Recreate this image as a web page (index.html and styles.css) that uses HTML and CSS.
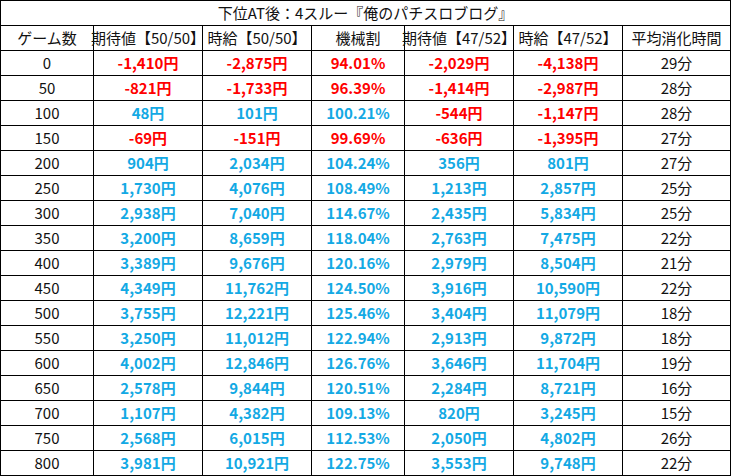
FILE: index.html
```html
<!DOCTYPE html>
<html lang="ja">
<head>
<meta charset="utf-8">
<title>下位AT後：4スルー</title>
<link rel="stylesheet" href="styles.css">
</head>
<body>
<table class="sheet">
  <colgroup>
    <col class="c-game"><col class="c-val"><col class="c-val"><col class="c-rate"><col class="c-val"><col class="c-val"><col class="c-time">
  </colgroup>
  <tr class="title-row"><td colspan="7">下位AT後：4スルー『俺のパチスロブログ』</td></tr>
  <tr class="head-row">
    <td><div class="fit">ゲーム数</div></td>
    <td><div class="fit">期待値【50/50】</div></td>
    <td><div class="fit">時給【50/50】</div></td>
    <td><div class="fit">機械割</div></td>
    <td><div class="fit">期待値【47/52】</div></td>
    <td><div class="fit">時給【47/52】</div></td>
    <td><div class="fit">平均消化時間</div></td>
  </tr>
  <tr><td>0</td><td class="r">-1,410円</td><td class="r">-2,875円</td><td class="r">94.01%</td><td class="r">-2,029円</td><td class="r">-4,138円</td><td>29分</td></tr>
  <tr><td>50</td><td class="r">-821円</td><td class="r">-1,733円</td><td class="r">96.39%</td><td class="r">-1,414円</td><td class="r">-2,987円</td><td>28分</td></tr>
  <tr><td>100</td><td class="b">48円</td><td class="b">101円</td><td class="b">100.21%</td><td class="r">-544円</td><td class="r">-1,147円</td><td>28分</td></tr>
  <tr><td>150</td><td class="r">-69円</td><td class="r">-151円</td><td class="r">99.69%</td><td class="r">-636円</td><td class="r">-1,395円</td><td>27分</td></tr>
  <tr><td>200</td><td class="b">904円</td><td class="b">2,034円</td><td class="b">104.24%</td><td class="b">356円</td><td class="b">801円</td><td>27分</td></tr>
  <tr><td>250</td><td class="b">1,730円</td><td class="b">4,076円</td><td class="b">108.49%</td><td class="b">1,213円</td><td class="b">2,857円</td><td>25分</td></tr>
  <tr><td>300</td><td class="b">2,938円</td><td class="b">7,040円</td><td class="b">114.67%</td><td class="b">2,435円</td><td class="b">5,834円</td><td>25分</td></tr>
  <tr><td>350</td><td class="b">3,200円</td><td class="b">8,659円</td><td class="b">118.04%</td><td class="b">2,763円</td><td class="b">7,475円</td><td>22分</td></tr>
  <tr><td>400</td><td class="b">3,389円</td><td class="b">9,676円</td><td class="b">120.16%</td><td class="b">2,979円</td><td class="b">8,504円</td><td>21分</td></tr>
  <tr><td>450</td><td class="b">4,349円</td><td class="b">11,762円</td><td class="b">124.50%</td><td class="b">3,916円</td><td class="b">10,590円</td><td>22分</td></tr>
  <tr><td>500</td><td class="b">3,755円</td><td class="b">12,221円</td><td class="b">125.46%</td><td class="b">3,404円</td><td class="b">11,079円</td><td>18分</td></tr>
  <tr><td>550</td><td class="b">3,250円</td><td class="b">11,012円</td><td class="b">122.94%</td><td class="b">2,913円</td><td class="b">9,872円</td><td>18分</td></tr>
  <tr><td>600</td><td class="b">4,002円</td><td class="b">12,846円</td><td class="b">126.76%</td><td class="b">3,646円</td><td class="b">11,704円</td><td>19分</td></tr>
  <tr><td>650</td><td class="b">2,578円</td><td class="b">9,844円</td><td class="b">120.51%</td><td class="b">2,284円</td><td class="b">8,721円</td><td>16分</td></tr>
  <tr><td>700</td><td class="b">1,107円</td><td class="b">4,382円</td><td class="b">109.13%</td><td class="b">820円</td><td class="b">3,245円</td><td>15分</td></tr>
  <tr><td>750</td><td class="b">2,568円</td><td class="b">6,015円</td><td class="b">112.53%</td><td class="b">2,050円</td><td class="b">4,802円</td><td>26分</td></tr>
  <tr><td>800</td><td class="b">3,981円</td><td class="b">10,921円</td><td class="b">122.75%</td><td class="b">3,553円</td><td class="b">9,748円</td><td>22分</td></tr>
</table>
</body>
</html>
```
FILE: styles.css
```css
html, body {
  margin: 0;
  padding: 0;
  background: #fff;
}
body {
  font-family: "Noto Sans CJK JP", "Noto Sans", sans-serif;
  font-size: 15px;
  color: #111;
}
.sheet {
  border-collapse: collapse;
  table-layout: fixed;
  width: 730px;
}
.c-game { width: 93px; }
.c-val { width: 109px; }
.c-rate { width: 93px; }
.c-time { width: 108px; }
.sheet td {
  border: 1px solid #000;
  height: 24px;
  padding: 0;
  text-align: center;
  vertical-align: middle;
  white-space: nowrap;
  line-height: 20px;
}
.sheet tr { height: 25px; }
.title-row td {
  font-size: 15px;
}
.head-row td {
  font-size: 15px;
}
.fit {
  display: flex;
  justify-content: center;
  overflow: visible;
  white-space: nowrap;
}
.r {
  color: #ff0000;
  font-weight: 700;
}
.b {
  color: #13a9e4;
  font-weight: 700;
}
```
